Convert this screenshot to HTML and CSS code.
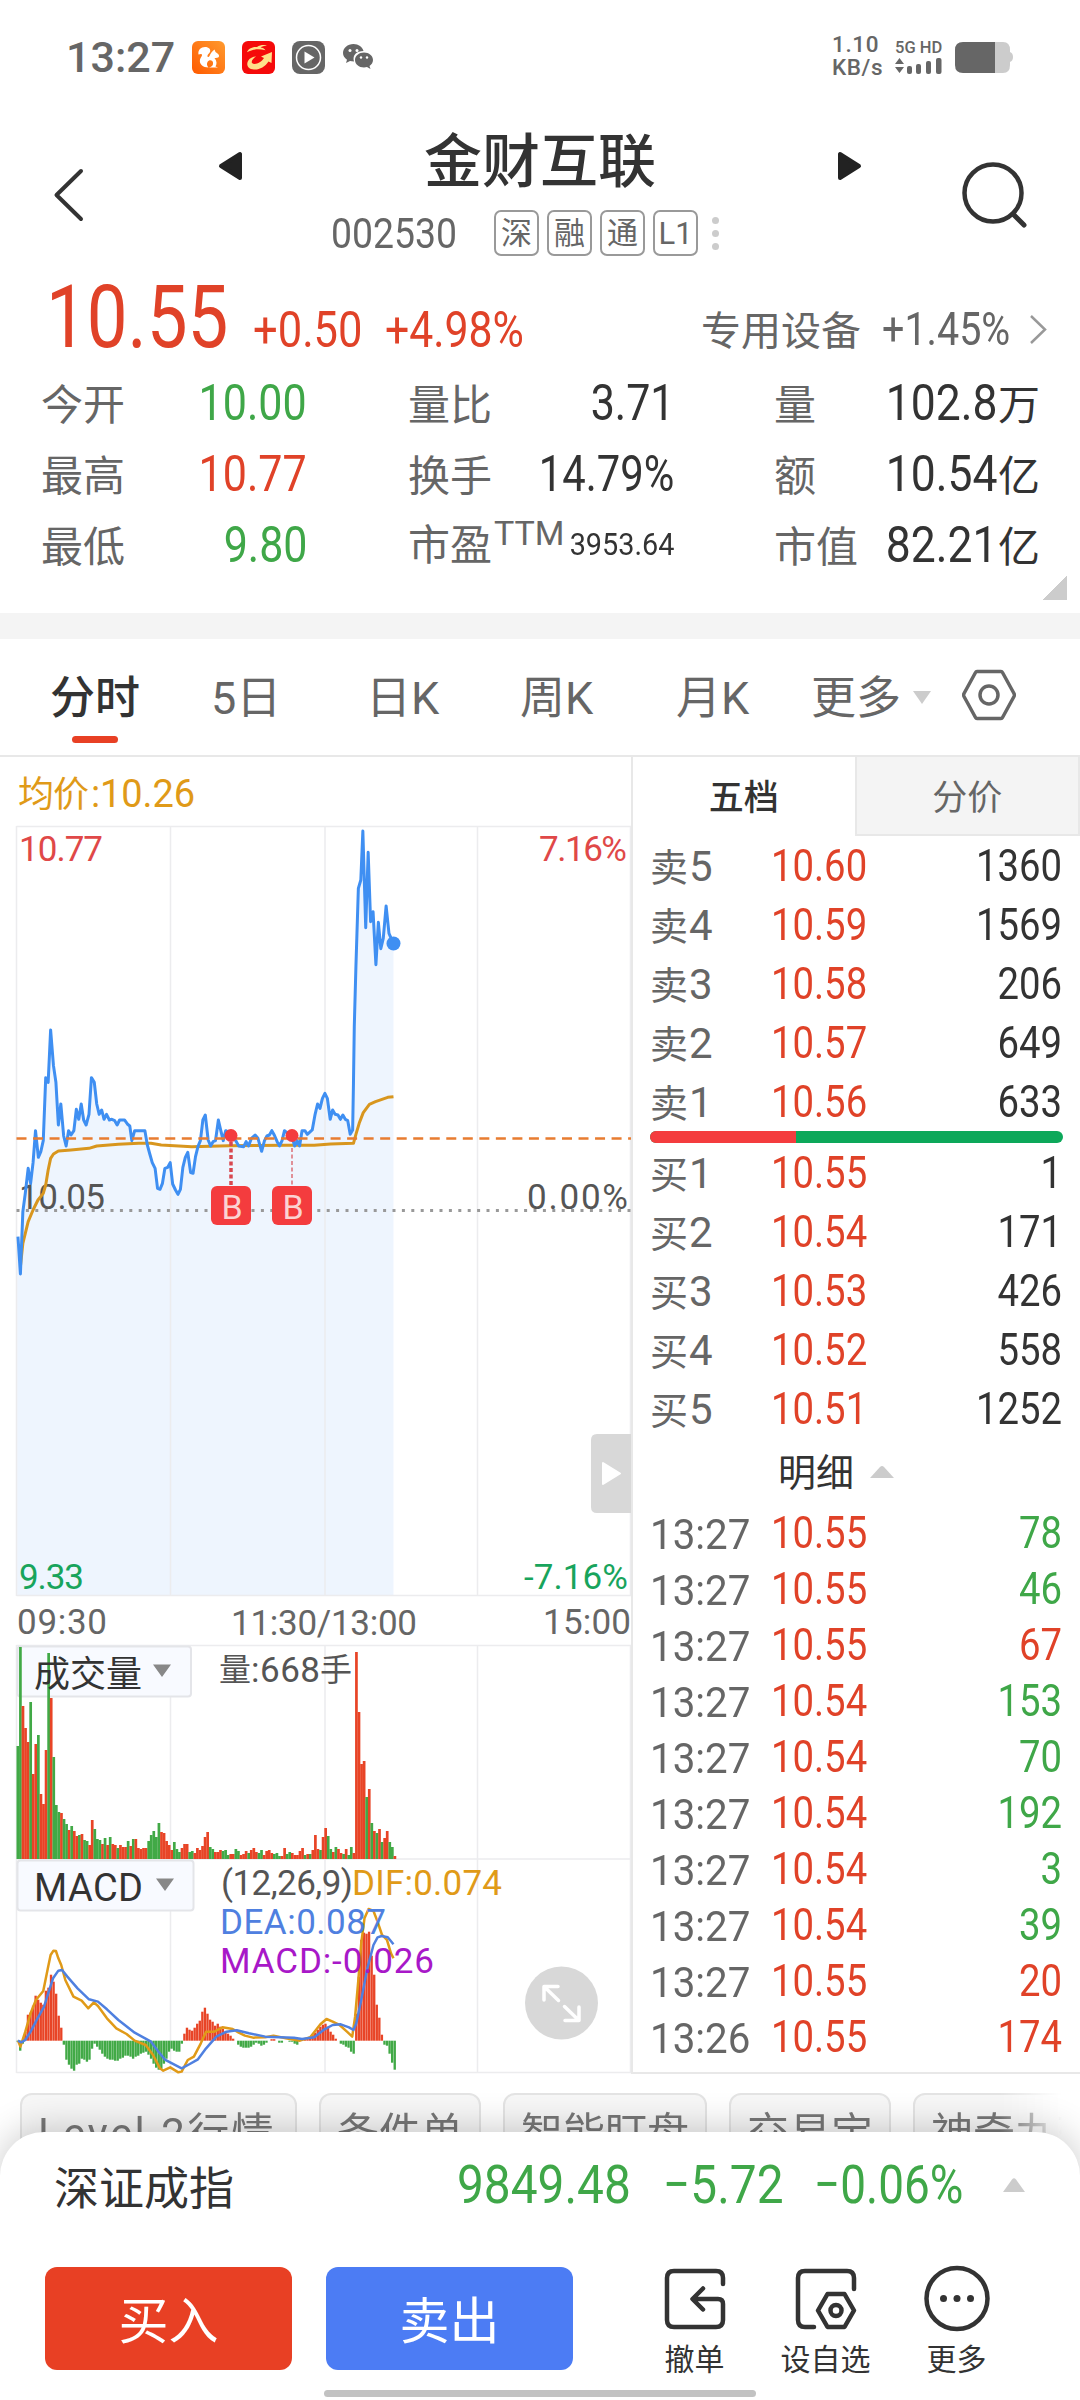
FILE: index.html
```html
<!DOCTYPE html>
<html lang="zh-CN">
<head>
<meta charset="utf-8">
<title>金财互联 002530</title>
<link rel="stylesheet" href="styles.css">
</head>
<body>
<div class="statusbar">
  <span class="clock">13:27</span>
  <svg class="app" viewBox="0 0 33 33"><defs><linearGradient id="uc" x1="1" y1="0" x2="0" y2="1"><stop offset="0" stop-color="#ff9a2e"/><stop offset="1" stop-color="#ff5a00"/></linearGradient></defs><rect width="33" height="33" rx="6" fill="url(#uc)"/><path fill="#fff" d="M6.500 13.500C5.500 9 9 6 13 6c4 0 6 2.500 5 5-1 2-3 2.500-2.500 4.500.5 1 1.500.5 2-.5 1-2.500 2.500-4.500 5-6.500l1 2.500c2.500 1.500 4 3 3.500 4.500-.7 1.700-3 1.200-4.500 1.500 2.500 3 2.500 6 1 8.500l2.500 1H17c3-.5 4.500-2.500 4-5s-4-3-5.500-.5c-1 2-.5 4 1 5.500-5.500 0-9.500-3.500-8.500-8 .5-2.500 2.500-3.500 2-5-.5-1-2-.5-3.500 0z"/></svg>
  <svg class="app" viewBox="0 0 33 33"><rect width="33" height="33" rx="6" fill="#f50a0a"/><path fill="#ffe08a" d="M15 6c3-2 7-2.500 10-1.500-3 .2-5 1-6.500 2 2 .2 4 1.200 5 2.800-6-1.500-13-1.500-18.500 2C6 8 10 5.500 15 6zM30 11l-.5 11-3-1.500C23 26 17 29 12 28.500c-6-.5-8-4.500-6-8.500 1.500-3 5-4.500 8-4.500-3 2-5 4.500-4 6.500 2.500 2.500 9 0 12-5L19 15.500z"/></svg>
  <svg class="app" viewBox="0 0 33 33"><rect width="33" height="33" rx="8" fill="#666"/><circle cx="16.500" cy="16.500" r="12" fill="none" stroke="#fff" stroke-width="1.500"/><path fill="#fff" d="M12.500 10.500v12l10-6z"/></svg>
  <svg class="wechat" viewBox="0 0 32 28"><path fill="#666" d="M11.500 1C5.500 1 1 5 1 10c0 3 1.500 5 4 6.700L4 20l4-2c1 .3 2.500.5 4 .5C10 12 15 8 21.500 8 20.500 4 16.500 1 11.500 1z"/><path fill="#666" d="M22 9.500c-5 0-9 3.300-9 7.500s4 7.500 9 7.500c1 0 2-.1 3-.4l3.500 1.900-1-3c2-1.500 3.500-3.500 3.500-6 0-4.200-4-7.500-9-7.500z"/><g fill="#fff"><circle cx="8" cy="7.500" r="1.500"/><circle cx="15" cy="7.500" r="1.500"/><circle cx="19" cy="14.500" r="1.200"/><circle cx="25" cy="14.500" r="1.200"/></g></svg>
  <div class="speed"><span>1.10</span><span>KB/s</span></div>
  <div class="net"><span>5G HD</span>
    <svg width="48" height="17" viewBox="0 0 48 17" fill="#666"><path d="M0 6l4.500-6L9 6zM0 9h9l-4.500 6z"/><rect x="12" y="8" width="5" height="8" rx="2"/><rect x="21" y="6" width="5" height="10" rx="2"/><rect x="31" y="3" width="5" height="13" rx="2"/><rect x="41" y="0" width="5.500" height="16" rx="2"/></svg>
  </div>
  <svg class="battery" viewBox="0 0 58 31"><path fill="#ccc" d="M36 0h12q7 0 7 8v2q3 1 3 5t-3 5v3q0 8-7 8H36z"/><path fill="#666" d="M8 0h32v31H8q-8 0-8-8V8q0-8 8-8z"/></svg>
</div>

<header class="header">
  <svg class="back" viewBox="0 0 32 56"><path d="M29 4L4.500 28 29 52" fill="none" stroke="#333" stroke-width="4" stroke-linecap="round" stroke-linejoin="round"/></svg>
  <svg class="prev" viewBox="0 0 25 30"><path d="M22 3v24L3 15z" fill="#222" stroke="#222" stroke-width="4" stroke-linejoin="round"/></svg>
  <div class="title">
    <h1>金财互联</h1>
    <div class="sub">
      <span class="num code">002530</span>
      <b>深</b><b>融</b><b>通</b><b>L1</b>
      <i class="dots"></i>
    </div>
  </div>
  <svg class="next" viewBox="0 0 25 30"><path d="M3 3v24l19-12z" fill="#222" stroke="#222" stroke-width="4" stroke-linejoin="round"/></svg>
  <svg class="search" viewBox="0 0 66 68"><circle cx="31" cy="31" r="28.500" fill="none" stroke="#333" stroke-width="4.500"/><path d="M51 52l11 11" stroke="#333" stroke-width="5" stroke-linecap="round"/></svg>
</header>

<section class="quote">
  <div class="price-row">
    <span class="num price">10.55</span>
    <span class="num chg">+0.50</span>
    <span class="num chg pct">+4.98%</span>
    <span class="sector">专用设备</span>
    <span class="num sector-pct">+1.45%</span>
    <svg class="chev" viewBox="0 0 19 31"><path d="M2 2l14 13.500L2 29" fill="none" stroke="#999" stroke-width="2.500"/></svg>
  </div>
  <div class="stats">
    <div><label>今开</label><span class="num up-g">10.00</span></div>
    <div><label>量比</label><span class="num in">3.71</span></div>
    <div><label>量</label><span><span class="num">102.8</span>万</span></div>
    <div><label>最高</label><span class="num up-r">10.77</span></div>
    <div><label>换手</label><span class="num wide">14.79%</span></div>
    <div><label>额</label><span><span class="num">10.54</span>亿</span></div>
    <div><label>最低</label><span class="num up-g">9.80</span></div>
    <div><label>市盈<sup>TTM</sup></label><span class="num pe">3953.64</span></div>
    <div><label>市值</label><span><span class="num">82.21</span>亿</span></div>
  </div>
  <div class="corner"></div>
</section>

<nav class="tabs">
  <span class="on">分时</span><span>5日</span><span>日K</span><span>周K</span><span>月K</span><span>更多</span>
  <svg width="18" height="13" viewBox="0 0 18 13"><path d="M0 0h18L9 13z" fill="#ccc"/></svg>
  <svg class="gear" width="54" height="52" viewBox="0 0 54 52" fill="none" stroke="#666" stroke-width="3.500" stroke-linejoin="round"><path d="M15 2.500h24q1 0 1.500 1L52 24.500q.7 1.500 0 3L40.500 48.500q-.5 1-1.500 1H15q-1 0-1.500-1L2 27.500q-.7-1.500 0-3L13.500 3.500q.5-1 1.500-1z"/><circle cx="27" cy="26" r="9"/></svg>
</nav>

<main class="main">
  <svg class="charts" viewBox="0 757 631 1317">
    <g transform="scale(.40816 .33333) translate(0 2400)">
      <path class="area" d="M42 2385V1310L44,1310 50,1422 56,1235 62,1180 69,1105 75,1150 81,1088 87,992 94,1072 100,1055 106,1022 112,833 118,847 124,690 131,797 137,847 143,975 149,912 156,1008 162,1038 168,992 174,1005 181,992 187,928 193,958 199,912 205,960 211,975 218,943 224,833 231,847 237,912 243,943 255,958 268,960 287,975 293,960 305,960 318,978 323,1022 330,992 355,992 361,1035 373,1088 380,1105 386,1165 392,1168 398,1150 404,1105 417,1088 423,1152 436,1183 442,1168 448,1102 460,1057 467,1118 473,1120 485,1040 497,960 503,945 510,1020 516,1038 528,1022 535,960 547,1022 553,992 579,1025 585,1038 609,1038 625,1005 641,1054 648,1022 666,992 685,1038 697,992 722,1038 734,1038 740,992 753,1003 765,990 778,912 796,880 809,958 815,930 852,962 858,1003 864,990 872,500 878,265 884,240 889,93 896,383 902,157 908,365 914,335 921,494 927,367 933,446 946,318 953,400 964,431V2385z"/>
    </g>
    <g class="grid">
      <path d="M16.500 826.500H631M16.500 1595.500H631M16.500 1645.500H631M16.500 1859H631M16.500 2072.500H631M16.500 826V1596M16.500 1645V2073M170.500 826V1596M325 826V1596M477.500 826V1596M630.500 826V1596M170.500 1645V2073M325 1645V2073M477.500 1645V2073M630.500 1645V2073"/>
    </g>
    <g fill="#e09a18"><text x="18" y="807" font-size="36" textLength="71">均价</text><text x="91" y="807" font-size="38" textLength="104">:10.26</text></g>
    <g font-size="35" fill="#e04848"><text x="19" y="861" textLength="84">10.77</text><text x="539" y="861" textLength="88">7.16%</text></g>
    <path d="M16.500 1210.500H631" stroke="#999" stroke-width="3" stroke-dasharray="3 6.400"/>
    <g font-size="35" fill="#555"><text x="19" y="1209" textLength="86">10.05</text><text x="527" y="1209" textLength="101">0.00%</text></g>
    <g transform="scale(.40816 .33333) translate(0 2400)" class="lines">
      <polyline stroke="#d8961e" points="50,1400 56,1330 69,1265 81,1230 93,1200 106,1180 112,1155 118,1110 124,1075 131,1062 143,1053 174,1050 218,1045 237,1038 290,1033 340,1030 370,1030 395,1035 470,1040 560,1037 700,1036 770,1036 810,1032 866,1030 872,1003 880,970 890,938 905,913 920,905 950,892 964,890"/>
      <polyline stroke="#3f8ff2" points="44,1310 50,1422 56,1235 62,1180 69,1105 75,1150 81,1088 87,992 94,1072 100,1055 106,1022 112,833 118,847 124,690 131,797 137,847 143,975 149,912 156,1008 162,1038 168,992 174,1005 181,992 187,928 193,958 199,912 205,960 211,975 218,943 224,833 231,847 237,912 243,943 249,930 255,958 261,943 268,960 274,958 281,962 287,975 293,960 305,960 312,972 318,978 323,1022 330,992 355,992 361,1035 367,1062 373,1088 380,1105 386,1165 392,1168 398,1150 404,1105 411,1102 417,1088 423,1152 430,1170 436,1183 442,1168 448,1102 454,1072 460,1057 467,1118 473,1120 479,1070 485,1040 491,1022 497,960 503,945 510,1020 516,1038 522,1025 528,1022 535,960 541,992 547,1022 553,992 566,1000 579,1025 585,1038 597,1040 603,1025 609,1038 616,1015 625,1005 632,1015 641,1054 648,1022 654,1008 660,1005 666,992 672,1005 679,1025 685,1038 691,1022 697,992 705,1000 715,1008 722,1038 728,1022 734,1038 740,992 747,992 753,1003 765,990 772,943 778,912 784,925 790,895 796,880 802,895 809,958 815,930 821,943 828,945 834,958 840,945 846,958 852,962 858,1003 864,990 866,850 868,680 872,500 878,265 884,240 889,93 896,383 902,157 908,365 914,335 921,494 927,367 933,446 939,415 946,318 953,400 964,431"/>
    </g>
    <path d="M16.500 1138.500H631" stroke="#e87c30" stroke-width="2.500" stroke-dasharray="10 6.530"/>
    <circle cx="393.500" cy="943.500" r="7" fill="#3f8ff2"/>
    <path d="M231 1142V1186" stroke="#d84850" stroke-width="3.500" stroke-dasharray="4 2.500"/>
    <path d="M292 1148V1186" stroke="#e09098" stroke-width="2" stroke-dasharray="4 2.500"/>
    <g fill="#f43c3e"><circle cx="231" cy="1135.500" r="6.500"/><circle cx="292" cy="1135.500" r="6.500"/><rect x="211" y="1186" width="40" height="39" rx="6"/><rect x="272" y="1186" width="40" height="39" rx="6"/></g>
    <g font-size="34" fill="#fbd3d3" text-anchor="middle"><text x="232" y="1219">B</text><text x="293" y="1219">B</text></g>
    <g font-size="35" fill="#18a45c"><text x="19" y="1589" textLength="65">9.33</text><text x="524" y="1589" textLength="104">-7.16%</text></g>
    <g font-size="35" fill="#666"><text x="17" y="1634" textLength="90">09:30</text><text x="231" y="1635" textLength="186">11:30/13:00</text><text x="543" y="1634" textLength="88">15:00</text></g>
    <path d="M631 1434H597q-6 0-6 6V1507q0 6 6 6H631z" fill="#d8d8d8"/>
    <path d="M603 1463v21l17-10.500z" fill="#fff" stroke="#fff" stroke-width="2" stroke-linejoin="round"/>

    <g class="chip"><rect x="17.500" y="1646.500" width="173.500" height="50" rx="3"/><rect x="17.500" y="1860.500" width="176" height="50" rx="3"/></g>
    <g id="volume"></g>
    <g id="macd"></g>
    <g transform="scale(.40816 .33333) translate(0 5550)" class="lines thin">
      <polyline stroke="#e09a18" points="44,572 50,590 62,545 75,490 88,450 106,423 118,350 124,315 131,302 137,303 143,325 150,345 160,390 180,440 200,452 216,475 230,457 240,468 262,505 285,535 310,552 330,572 357,585 375,615 392,655 400,662 417,652 437,667 445,665 460,630 475,620 492,580 505,545 525,545 545,532 570,537 585,548 600,557 620,563 650,562 670,557 700,565 735,572 760,562 785,523 800,507 815,515 832,525 850,545 863,560 870,500 878,390 885,280 893,205 903,177 915,183 925,215 936,255 948,270 958,310 964,325"/>
      <polyline stroke="#4f80e0" points="44,572 52,577 62,570 75,545 92,505 108,470 118,430 130,385 143,362 152,360 165,380 190,415 218,448 240,455 262,478 290,510 330,548 370,575 390,608 405,630 445,655 465,642 485,628 505,595 530,560 555,545 580,541 610,550 650,560 720,563 740,567 770,562 795,538 815,525 835,523 855,532 866,540 873,520 885,450 900,355 915,285 925,262 935,258 950,262 964,283"/>
    </g>
    <g fill="#888"><path d="M153 1664.500h18l-9 12.500zM156 1878.500h18l-9 12.500z"/></g>
    <g fill="#333"><text x="34" y="1687" font-size="36">成交量</text><text x="34" y="1901" font-size="38" textLength="109">MACD</text></g>
    <g fill="#555"><text x="219" y="1681" font-size="32">量</text><text x="251" y="1682" font-size="35" textLength="69">:668</text><text x="320" y="1681" font-size="32">手</text></g>
    <g font-size="35"><text x="221" y="1895" fill="#555" textLength="132">(12,26,9)</text><text x="352" y="1895" fill="#e09a18" textLength="150">DIF:0.074</text><text x="220" y="1934" fill="#4f80e0" textLength="166">DEA:0.087</text><text x="220" y="1973" fill="#a818c8" textLength="214">MACD:-0.026</text></g>
    <circle cx="561.500" cy="2003" r="36.500" fill="#d8d8d8"/>
    <path d="M544 2000V1986.500h14M545 1987.500L558.500 2000.500M579 2007V2020.500H565M578 2019.500L564.500 2006.500" fill="none" stroke="#fff" stroke-width="3.500" stroke-linecap="round" stroke-linejoin="round"/>
  </svg>

  <aside class="depth">
    <div class="dtabs"><span class="on">五档</span><span>分价</span></div>
    <ul class="book">
      <li><span>卖<em>5</em></span><span class="num r">10.60</span><span class="num v">1360</span></li>
      <li><span>卖<em>4</em></span><span class="num r">10.59</span><span class="num v">1569</span></li>
      <li><span>卖<em>3</em></span><span class="num r">10.58</span><span class="num v">206</span></li>
      <li><span>卖<em>2</em></span><span class="num r">10.57</span><span class="num v">649</span></li>
      <li><span>卖<em>1</em></span><span class="num r">10.56</span><span class="num v">633</span></li>
    </ul>
    <div class="ratio"><i></i></div>
    <ul class="book">
      <li><span>买<em>1</em></span><span class="num r">10.55</span><span class="num v">1</span></li>
      <li><span>买<em>2</em></span><span class="num r">10.54</span><span class="num v">171</span></li>
      <li><span>买<em>3</em></span><span class="num r">10.53</span><span class="num v">426</span></li>
      <li><span>买<em>4</em></span><span class="num r">10.52</span><span class="num v">558</span></li>
      <li><span>买<em>5</em></span><span class="num r">10.51</span><span class="num v">1252</span></li>
    </ul>
    <div class="detail">明细<svg width="24" height="12" viewBox="0 0 24 12"><path d="M0 12L10 1q2-2 4 0L24 12z" fill="#ccc"/></svg></div>
    <ul class="book ticks">
      <li><span class="t">13:27</span><span class="num r">10.55</span><span class="num g">78</span></li>
      <li><span class="t">13:27</span><span class="num r">10.55</span><span class="num g">46</span></li>
      <li><span class="t">13:27</span><span class="num r">10.55</span><span class="num r">67</span></li>
      <li><span class="t">13:27</span><span class="num r">10.54</span><span class="num g">153</span></li>
      <li><span class="t">13:27</span><span class="num r">10.54</span><span class="num g">70</span></li>
      <li><span class="t">13:27</span><span class="num r">10.54</span><span class="num g">192</span></li>
      <li><span class="t">13:27</span><span class="num r">10.54</span><span class="num g">3</span></li>
      <li><span class="t">13:27</span><span class="num r">10.54</span><span class="num g">39</span></li>
      <li><span class="t">13:27</span><span class="num r">10.55</span><span class="num r">20</span></li>
      <li><span class="t">13:26</span><span class="num r">10.55</span><span class="num r">174</span></li>
    </ul>
  </aside>
</main>

<div class="tags"><span class="lv">Level-2行情</span><span>条件单</span><span>智能盯盘</span><span>交易宝</span><span>神奇九转</span></div>

<footer class="sheet">
  <div class="index">
    <span class="name">深证成指</span>
    <span class="num a">9849.48</span><span class="num b">−5.72</span><span class="num c">−0.06%</span>
    <svg width="24" height="14" viewBox="0 0 24 14"><path d="M1 14L10 1.500q2-2.500 4 0L23 14z" fill="#ccc"/></svg>
  </div>
  <div class="actions">
    <button class="buy">买入</button>
    <button class="sell">卖出</button>
    <div class="act">
      <svg viewBox="0 0 64 64"><path d="M60 17V11q0-7-7-7H11q-7 0-7 7V53q0 7 7 7H53q7 0 7-7V37q0-5-5-5H30M40 21.500L29.500 32 40 42.500" /></svg><span>撤单</span>
    </div>
    <div class="act">
      <svg viewBox="0 0 64 64"><path d="M60 22V11q0-7-7-7H11q-7 0-7 7V53q0 7 7 7h9M33.500 27h17l9.500 16.500L50.500 60h-17L24 43.500z"/><circle cx="42" cy="43.500" r="5.500"/></svg><span>设自选</span>
    </div>
    <div class="act">
      <svg viewBox="0 0 64 64"><circle cx="32" cy="31.500" r="30.500"/><g class="fill"><circle cx="18.500" cy="31.500" r="3.500"/><circle cx="32" cy="31.500" r="3.500"/><circle cx="45.500" cy="31.500" r="3.500"/></g></svg><span>更多</span>
    </div>
  </div>
  <div class="home"></div>
</footer>
<script src="charts.js"></script>
</body>
</html>
```
FILE: styles.css
```css
* { box-sizing: border-box; margin: 0; padding: 0; }
body {
  width: 1080px; height: 2400px; overflow: hidden;
  display: flex; flex-direction: column;
  background: #fff; color: #333;
  font-family: Roboto, "Noto Sans CJK SC", sans-serif;
}
svg { display: block; flex: none; }
em, i { font-style: normal; }
ul { list-style: none; }
.num { display: inline-block; transform: scaleX(.87); transform-origin: right; white-space: nowrap; font-weight: 450; }

/* status bar */
.statusbar { height: 112px; flex: none; display: flex; align-items: center; padding: 0 67px 0 66px; color: #666; }
.clock { font-size: 43px; font-weight: 500; width: 126px; line-height: 44px; padding-top: 1px; }
.app { width: 33px; height: 33px; margin: 2px 17px 0 0; }
.wechat { width: 32px; height: 28px; margin-top: 2px; }
.speed { margin-left: auto; width: 50px; height: 47px; font-size: 22.5px; letter-spacing: .6px; font-weight: 500; line-height: 23px; display: flex; flex-direction: column; }
.net { width: 48px; margin: 0 12px 0 13px; padding-top: 2px; font-size: 16.5px; font-weight: 500; line-height: 16px; white-space: nowrap; }
.net svg { margin-top: 2px; }
.battery { width: 58px; height: 31px; margin-top: 3px; }

/* header */
.header { height: 158px; flex: none; display: flex; align-items: flex-start; padding-left: 52px; }
.back { width: 32px; height: 56px; margin-top: 55px; }
.prev { width: 25px; height: 30px; margin: 39px 0 0 134px; }
.title { width: 594px; }
.next { width: 25px; height: 30px; margin-top: 39px; }
.title h1 { font-size: 58px; font-weight: 500; line-height: 60px; text-align: center; padding-top: 20px; height: 98px; }
.sub { display: flex; align-items: center; padding-left: 88px; color: #666; height: 46px; }
.code { font-size: 42px; font-weight: 400; width: 163px; transform: scaleX(.89); transform-origin: left; line-height: 46px; padding-top: 1px; }
.sub b { width: 45px; height: 46px; border: 2px solid #999; border-radius: 7px; margin-right: 8px; font-size: 31px; font-weight: 400; line-height: 43px; text-align: center; }
.dots { width: 7px; height: 7px; border-radius: 50%; background: #ccc; margin-left: 6px; box-shadow: 0 -13px #ccc, 0 13px #ccc; }
.search { width: 66px; height: 68px; margin: 50px 0 0 100px; }

/* quote */
.quote { height: 369px; flex: none; border-bottom: 26px solid #f4f4f4; }
.price-row { display: flex; align-items: baseline; height: 98px; padding: 3px 0 0 46px; color: #e04228; }
.price-row .num { transform-origin: left; }
.price { font-size: 88px; line-height: 88px; width: 207px; }
.price-row .price { transform: scaleX(.825); }
.chg { font-size: 50px; width: 132px; }
.price-row .pct { transform: scaleX(.855); }
.sector { font-size: 40px; color: #666; margin-left: 184px; width: 181px; position: relative; top: -2px; }
.price-row .sector-pct { font-size: 47px; font-weight: 400; color: #666; width: 147px; transform: scaleX(.84); position: relative; top: -2px; }
.chev { width: 19px; height: 31px; position: relative; top: -2px; }
.stats { display: grid; grid-template-columns: 266px 266px 262px; column-gap: 101px; padding-left: 41px; line-height: 71px; }
.stats > div { display: flex; justify-content: space-between; align-items: baseline; height: 71px; font-size: 42px; white-space: nowrap; }
.stats > div:nth-child(3n) { margin-left: -1px; margin-right: -3px; }
.stats label { color: #666; width: 84px; }
.stats .num { font-size: 50px; transform: scaleX(.86); }
.stats > div:nth-child(3n) .num { transform: scaleX(.89); }
.stats .wide { transform: scaleX(.835); }
.stats .pe { font-size: 32px; font-weight: 400; transform: scaleX(.9); position: relative; top: -5px; }
.stats sup { font-size: 34px; line-height: 0; vertical-align: 15px; margin-left: 2px; }
.up-r, .r { color: #e04228; }
.up-g, .g { color: #3fa748; }
.corner { width: 24px; height: 24px; margin: -5px 13px 0 auto; background: linear-gradient(135deg, transparent 50%, #ccc 50%); }

/* tabs */
.tabs { height: 118px; flex: none; display: grid; grid-template-columns: 161px 155px 154px 156px 135px 102px 49px 60px; align-items: center; padding: 0 0 2px 50px; border-bottom: 2px solid #e8e8e8; font-size: 45px; color: #666; line-height: 112px; }
.tabs span { padding-top: 4px; }
.tabs .on { color: #333; font-weight: 500; width: 90px; }
.tabs .on::after { content: ""; display: block; width: 46px; height: 7px; border-radius: 4px; background: #e84024; margin: -19px auto 12px; }
.tabs .gear { margin-top: -4px; }

/* charts */
.main { display: flex; height: 1317px; flex: none; }
.charts { width: 631px; height: 1317px; }
.charts text { font-weight: 430; }
.grid path { stroke: #ececee; stroke-width: 1.5; fill: none; }
.area { fill: #eef5fe; }
.lines { fill: none; stroke-width: 3; stroke-linejoin: round; }
.lines polyline { vector-effect: non-scaling-stroke; }
.thin { stroke-width: 2.5; }
.chip rect { fill: #f8faff; stroke: #e4e5e9; stroke-width: 2; }

/* order book */
.depth { width: 449px; border-left: 2px solid #e8e8e8; border-bottom: 2px solid #e8e8e8; }
.dtabs { display: flex; height: 79px; font-size: 35px; text-align: center; color: #666; }
.dtabs span { flex: 1; background: #f4f4f4; border: 2px solid #e8e8e8; border-top: 0; line-height: 83px; height: 79px; }
.dtabs .on { background: #fff; border: 0; color: #333; font-weight: 500; }
.book li { display: grid; grid-template-columns: 121px 1fr 130px; height: 59px; line-height: 61px; padding: 0 18px 0 17px; font-size: 38px; color: #666; align-items: baseline; }
.book em { font-size: 42px; margin-left: 1px; }
.book .num { font-size: 44px; text-align: right; }
.book .num:nth-child(2) { transform-origin: left; text-align: left; }
.book .v { color: #333; }
.ticks li { height: 56px; line-height: 58px; }
.ticks .t { font-size: 42px; transform: scaleX(.96); transform-origin: left; position: relative; top: 1px; }
.ratio { height: 12px; margin: 0 17px 0 17px; border-radius: 6px; background: #0ca85a; overflow: hidden; }
.ratio i { display: block; width: 146px; height: 12px; background: #f43c3e; }
.detail { height: 66px; display: flex; align-items: center; padding-left: 145px; font-size: 38px; gap: 16px; line-height: 66px; padding-top: 4px; }
.detail svg { margin-top: -3px; }

/* tags */
.tags { height: 106px; flex: none; display: flex; gap: 22px; padding: 19px 0 0 20px; width: 1080px; overflow: hidden; -webkit-mask-image: linear-gradient(90deg, #000 1000px, transparent 1062px); mask-image: linear-gradient(90deg, #000 1000px, transparent 1062px); }
.tags span { flex: none; height: 84px; border: 2px solid #e4e4e4; border-radius: 12px; background: #f7f7f7; color: #777; font-size: 42px; line-height: 77px; padding: 0 16px; }
.tags .lv { width: 277px; letter-spacing: 2.4px; white-space: nowrap; }

/* bottom sheet */
.sheet { height: 268px; flex: none; margin-top: -48px; background: #fff; border-radius: 44px 44px 0 0; position: relative; box-shadow: 0 -4px 36px rgba(0, 0, 0, .2); display: flex; flex-direction: column; }
.index { height: 106px; display: flex; align-items: center; padding-left: 54px; }
.index .name { font-size: 45px; width: 403px; }
.index .num { font-size: 54px; color: #3fa748; transform: scaleX(.885); transform-origin: left; padding-bottom: 2px; }
.index .a { width: 206px; }
.index .b { width: 151px; }
.index .num.c { width: 188px; transform: scaleX(.85); }
.actions { display: flex; padding: 29px 0 0 45px; height: 132px; }
.actions button { width: 247px; height: 103px; border: 0; border-radius: 12px; color: #fff; font: inherit; font-size: 50px; line-height: 103px; padding-top: 4px; margin-right: 34px; }
.buy { background: #e84024; }
.sell { background: #4c7cf4; }
.act { width: 131px; display: flex; flex-direction: column; align-items: center; font-size: 30px; line-height: 40px; }
.act:nth-child(3) { margin-left: 22px; }
.act svg { width: 64px; height: 64px; margin-bottom: 9px; fill: none; stroke: #333; stroke-width: 4.5; stroke-linecap: round; stroke-linejoin: round; overflow: visible; }
.act .fill { fill: #333; stroke: none; }
.home { width: 432px; height: 7px; border-radius: 4px; background: #c2c2c2; margin: 20px auto 0; }
```
FILE: charts.js
```js
// One bar per minute; height in pixels, sign gives the colour (positive red, negative green).
const step = 2.565;
const volume = [
  -113, -212, 153, 131, 117, -157, 85, 115, -124, 65, 55, 109, -206, 161, -102, -54, -47, 46, -40, -35,
  29, -33, 28, 23, -24, 25, -19, -18, 14, 39, -30, -20, -19, 15, -21, 14, -22, 15, 14, -11, 14, 12, 12,
  -18, 13, -20, 20, 11, 10, 11, 11, -18, -24, -28, -22, -36, 27, 26, 18, 14, 9, -17, -10, -7, 11, 15, 15,
  -7, -8, 6, 11, 9, 13, 22, 27, -12, -10, 7, 7, 9, -8, -9, -4, 5, 5, -10, -8, 4, 5, 8, -6, 9, 11, 7, -6,
  -9, 4, 8, 9, 6, -5, -6, -3, 3, 11, -5, -7, 6, 4, 4, 8, 11, -4, 5, -5, 9, 24, 10, -9, 22, 31, -23, -10,
  7, -12, 10, 6, -5, 10, -4, -12, 6, 207, 147, 95, 98, -62, 70, -36, 28, -26, 30, -17, 21, 28, -17, -12, 3
];
const macd = [
  -1, -10, -3, 9, 26, 28, 35, 45, 41, 38, 36, 50, 53, 66, 59, 47, 25, 13, -4, -19, -24, -28, -30, -24, -23,
  -18, -19, -21, -19, -8, -3, -6, -9, -13, -16, -18, -19, -19, -20, -20, -18, -17, -15, -15, -16, -18, -16,
  -15, -13, -12, -11, -14, -18, -23, -27, -29, -28, -23, -18, -11, -8, -10, -11, -11, -3, 7, 13, 11, 10, 13,
  17, 20, 29, 33, 27, 21, 19, 15, 17, 14, 12, 9, 7, 5, 2, 0, -4, -6, -7, -7, -7, -6, -4, -2, -3, -5, -4,
  -2, 0, 1.5, 1.5, 0, -2, -2, 0, 0, -1, -1, -3, -4, 0, 0, 1, 2, 3, 6, 8, 11, 14, 16, 17, 14, 9, 6, 2, 0,
  -3, -4, -6, -7, -11, -13, 27, 64, 101, 108, 107, 109, 85, 66, 36, 23, 6, -4, -5, -13, -22, -29
];

function drawBars(id, data, base, width, signed) {
  const group = document.getElementById(id);
  data.forEach((v, i) => {
    const bar = document.createElementNS("http://www.w3.org/2000/svg", "rect");
    bar.setAttribute("x", 16.5 + i * step);
    bar.setAttribute("y", signed && v < 0 ? base : base - Math.abs(v));
    bar.setAttribute("width", width);
    bar.setAttribute("height", Math.abs(v));
    bar.setAttribute("fill", v > 0 ? "#e84426" : "#41a946");
    group.appendChild(bar);
  });
}
drawBars("volume", volume, 1859, 2.7, false);
drawBars("macd", macd, 2040.7, 2.35, true);
```
